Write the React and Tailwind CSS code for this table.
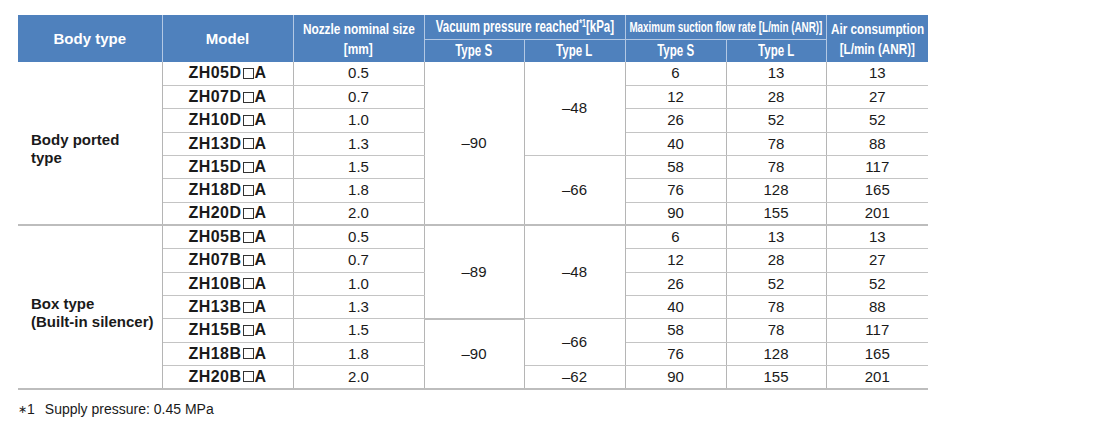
import React from "react";

const bodyRows = [
  ["ZH05D", "0.5", "6", "13", "13"],
  ["ZH07D", "0.7", "12", "28", "27"],
  ["ZH10D", "1.0", "26", "52", "52"],
  ["ZH13D", "1.3", "40", "78", "88"],
  ["ZH15D", "1.5", "58", "78", "117"],
  ["ZH18D", "1.8", "76", "128", "165"],
  ["ZH20D", "2.0", "90", "155", "201"],
];

const boxRows = [
  ["ZH05B", "0.5", "6", "13", "13"],
  ["ZH07B", "0.7", "12", "28", "27"],
  ["ZH10B", "1.0", "26", "52", "52"],
  ["ZH13B", "1.3", "40", "78", "88"],
  ["ZH15B", "1.5", "58", "78", "117"],
  ["ZH18B", "1.8", "76", "128", "165"],
  ["ZH20B", "2.0", "90", "155", "201"],
];

// vacuum pressure cells keyed by first row: [rowSpan, value]
const bodyTypeS = { 0: [7, "–90"] };
const bodyTypeL = { 0: [4, "–48"], 4: [3, "–66"] };
const boxTypeS = { 0: [4, "–89"], 4: [3, "–90"] };
const boxTypeL = { 0: [4, "–48"], 4: [2, "–66"], 6: [1, "–62"] };

function Narrow({ children, className }) {
  return (
    <div className="flex justify-center whitespace-nowrap">
      <span className={"inline-block " + className}>{children}</span>
    </div>
  );
}

function ModelName({ name }) {
  return (
    <span className="inline-flex items-center tracking-[0.5px]">
      {name}
      <span className="inline-block w-[11px] h-[11px] border border-[#333] mx-[1px]"></span>
      A
    </span>
  );
}

function Section({ label, rows, typeS, typeL }) {
  return rows.map((r, i) => {
    const last = i === rows.length - 1;
    const line = last ? "border-b-2 border-b-[#bdbdbd]" : "border-b border-b-[#c4c4c4]";
    const cell = "border-r border-r-[#b5b5b5] text-center " + line;
    return (
      <tr key={r[0]} className="h-[23.35px]">
        {i === 0 && (
          <td
            rowSpan={rows.length}
            className="border-r border-r-[#b5b5b5] border-b-2 border-b-[#bdbdbd] pl-[13px] pt-[12px] text-[15px] font-bold leading-[18px] text-[#1a1a1a]"
          >
            {label}
          </td>
        )}
        <td className={cell + " text-[16px] font-bold text-[#1a1a1a]"}>
          <ModelName name={r[0]} />
        </td>
        <td className={cell}>{r[1]}</td>
        {typeS[i] && (
          <td
            rowSpan={typeS[i][0]}
            className="border-r border-r-[#b5b5b5] text-center border-b-2 border-b-[#bdbdbd]"
          >
            {typeS[i][1]}
          </td>
        )}
        {typeL[i] && (
          <td
            rowSpan={typeL[i][0]}
            className={
              i + typeL[i][0] === rows.length
                ? "border-r border-r-[#b5b5b5] text-center border-b-2 border-b-[#bdbdbd]"
                : "border-r border-r-[#b5b5b5] text-center border-b border-b-[#c4c4c4]"
            }
          >
            {typeL[i][1]}
          </td>
        )}
        <td className={cell}>{r[2]}</td>
        <td className={cell}>{r[3]}</td>
        <td className={"text-center " + line}>{r[4]}</td>
      </tr>
    );
  });
}

function App() {
  const head = "bg-[#4f81bd] text-white font-bold border-[#b3c8e4] p-0";

  return (
    <div className="min-h-screen bg-white font-['Liberation_Sans',Arial,sans-serif] text-[#1a1a1a] pt-[15px] pl-[18px]">
      <table className="table-fixed border-collapse w-[910px] text-[15px] leading-[18px]">
        <colgroup>
          <col className="w-[144px]" />
          <col className="w-[131px]" />
          <col className="w-[131px]" />
          <col className="w-[100px]" />
          <col className="w-[101px]" />
          <col className="w-[101px]" />
          <col className="w-[100px]" />
          <col className="w-[102px]" />
        </colgroup>
        <thead>
          <tr className="h-[24px]">
            <th rowSpan={2} className={head + " border-r text-[15px]"}>
              Body type
            </th>
            <th rowSpan={2} className={head + " border-r text-[15px]"}>
              Model
            </th>
            <th rowSpan={2} className={head + " border-r text-[15px] leading-[20px]"}>
              <Narrow className="scale-x-[0.79]">Nozzle nominal size</Narrow>
              <Narrow className="scale-x-[0.79]">[mm]</Narrow>
            </th>
            <th colSpan={2} className={head + " border-r border-b text-[16px]"}>
              <Narrow className="scale-x-[0.72]">
                Vacuum pressure reached
                <sup className="text-[10px] font-bold">*1</sup>[kPa]
              </Narrow>
            </th>
            <th colSpan={2} className={head + " border-r border-b text-[14px]"}>
              <Narrow className="scale-x-[0.705]">
                Maximum suction flow rate [L/min (ANR)]
              </Narrow>
            </th>
            <th rowSpan={2} className={head + " text-[15px] leading-[20px]"}>
              <Narrow className="scale-x-[0.78]">Air consumption</Narrow>
              <Narrow className="scale-x-[0.78]">[L/min (ANR)]</Narrow>
            </th>
          </tr>
          <tr className="h-[23px]">
            <th className={head + " border-r text-[16px]"}>
              <Narrow className="scale-x-[0.72]">Type S</Narrow>
            </th>
            <th className={head + " border-r text-[16px]"}>
              <Narrow className="scale-x-[0.72]">Type L</Narrow>
            </th>
            <th className={head + " border-r text-[16px]"}>
              <Narrow className="scale-x-[0.72]">Type S</Narrow>
            </th>
            <th className={head + " border-r text-[16px]"}>
              <Narrow className="scale-x-[0.72]">Type L</Narrow>
            </th>
          </tr>
        </thead>
        <tbody>
          <Section
            label={<>Body ported<br />type</>}
            rows={bodyRows}
            typeS={bodyTypeS}
            typeL={bodyTypeL}
          />
          <Section
            label={<>Box type<br />(Built-in silencer)</>}
            rows={boxRows}
            typeS={boxTypeS}
            typeL={boxTypeL}
          />
        </tbody>
      </table>

      <p className="mt-[9px] text-[14px] text-[#1a1a1a]">
        <span className="text-[11px] relative -top-[1px]">∗</span>1
        <span className="ml-[10px]">Supply pressure: 0.45 MPa</span>
      </p>
    </div>
  );
}

export default App;
